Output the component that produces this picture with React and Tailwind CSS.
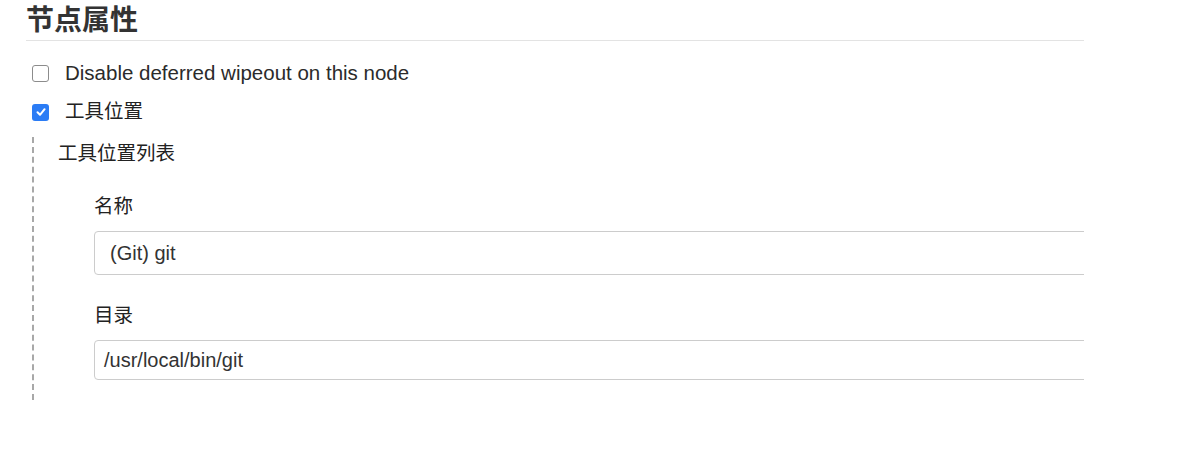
import React from 'react';

const font = { fontFamily: '"Liberation Sans", "Noto Sans CJK SC", sans-serif' };

const Checkbox = ({ checked }) =>
  checked ? (
    <span className="flex h-[17px] w-[17px] items-center justify-center rounded-[3px] bg-[#2b7cf5]">
      <svg width="12" height="12" viewBox="0 0 12 12" fill="none">
        <path d="M2.5 6.3 L5 8.8 L9.6 3.2" stroke="#fff" strokeWidth="2" strokeLinecap="round" strokeLinejoin="round" />
      </svg>
    </span>
  ) : (
    <span className="block h-[17px] w-[17px] rounded-[3px] border border-[#8c8c8c] bg-white" />
  );

const App = () => {
  return (
    <div className="min-h-[450px] w-[1200px] bg-white text-[#2b2b2b]" style={font}>
      <div className="ml-[26px] w-[1058px] overflow-hidden">
        <h2 className="h-[41px] border-b border-[#e3e3e3] text-[28px] font-semibold leading-[42px] text-[#333]">
          节点属性
        </h2>

        <div className="mt-[20px] flex h-[24px] items-center">
          <span className="ml-[6px]"><Checkbox /></span>
          <span className="ml-[16px] text-[20.5px]">Disable deferred wipeout on this node</span>
        </div>

        <div className="mt-[15px] flex h-[24px] items-center">
          <span className="ml-[6px]"><Checkbox checked /></span>
          <span className="ml-[16px] text-[19.5px] text-[#222]">工具位置</span>
        </div>

        <div className="ml-[6px] mt-[13px] border-l-2 border-dashed border-[#a8a8a8] pb-[20px] pl-[24px] pt-[2px]">
          <div className="h-[28px] text-[19.5px] leading-[28px] text-[#222]">工具位置列表</div>

          <div className="ml-[36px]">
            <div className="mt-[25px] h-[28px] text-[19.5px] leading-[28px] text-[#222]">名称</div>
            <div className="mt-[11px] flex h-[44px] w-[1100px] items-center rounded-[4px] border border-[#cccccc] pl-[15px] text-[20px] text-[#333]">
              (Git) git
            </div>

            <div className="mt-[26px] h-[28px] text-[19.5px] leading-[28px] text-[#222]">目录</div>
            <div className="mt-[11px] flex h-[40px] w-[1100px] items-center rounded-[4px] border border-[#cccccc] pl-[9px] text-[20px] text-[#333]">
              /usr/local/bin/git
            </div>
          </div>
        </div>
      </div>
    </div>
  );
};

export default App;
